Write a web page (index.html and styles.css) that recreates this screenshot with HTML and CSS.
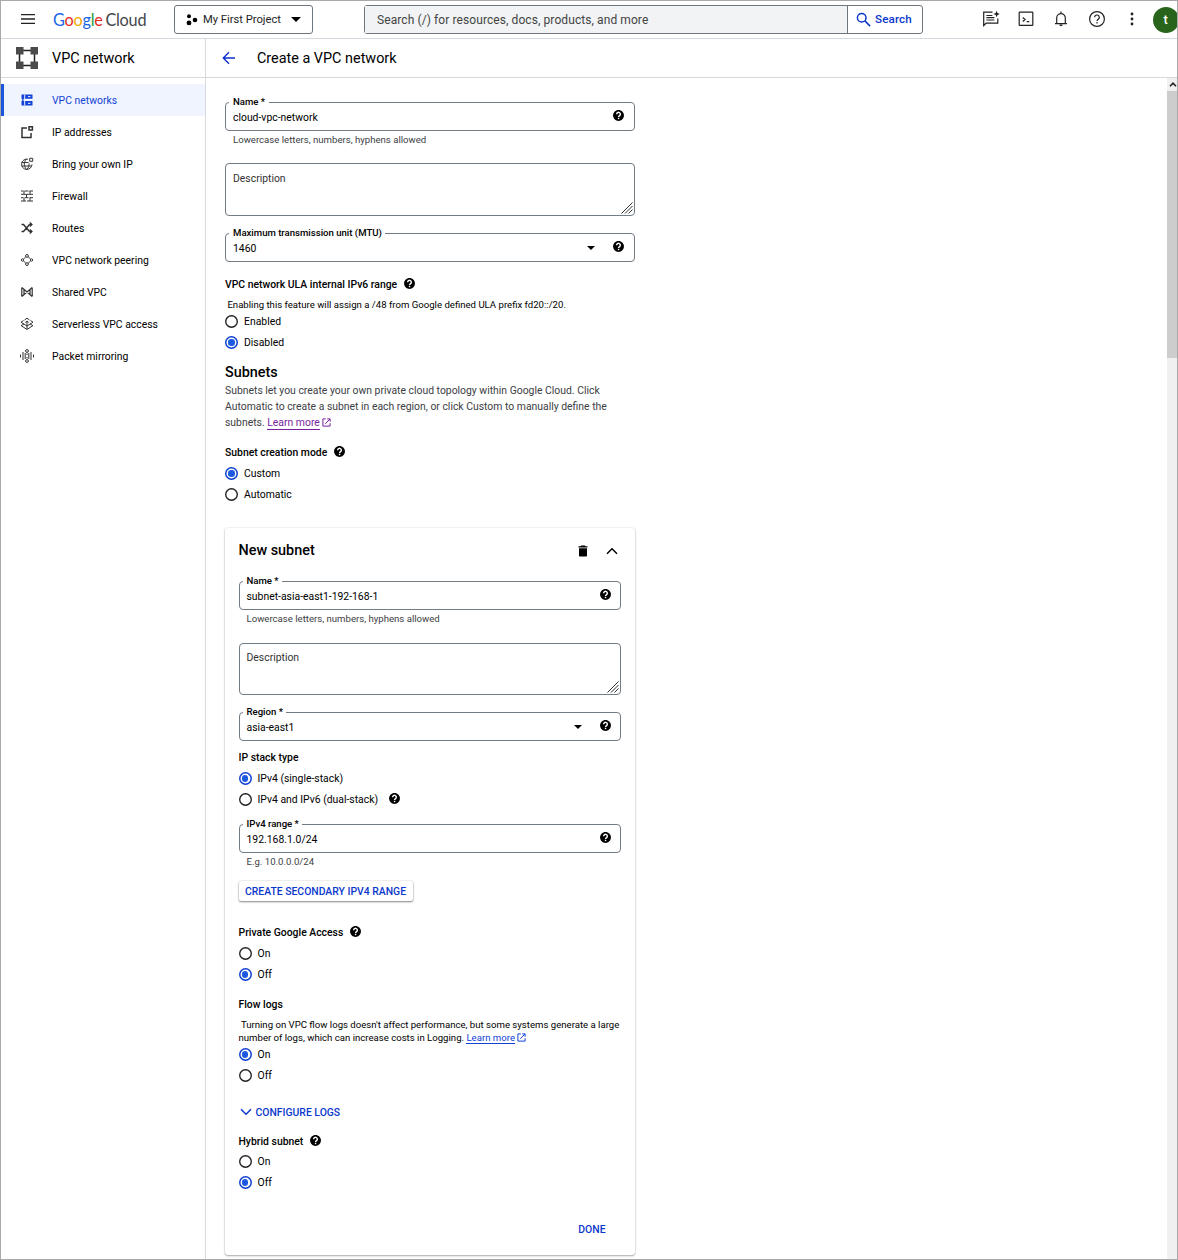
FILE: index.html
```html
<!DOCTYPE html>
<html lang="en">
<head>
<meta charset="utf-8">
<title>Create a VPC network – Google Cloud</title>
<link rel="stylesheet" href="styles.css">
</head>
<body>
<svg class="defs" width="0" height="0">
  <symbol id="help" viewBox="0 0 24 24"><path d="M12 2C6.48 2 2 6.48 2 12s4.48 10 10 10 10-4.48 10-10S17.52 2 12 2z"/><path d="M8.600 9.700a3.400 3.400 0 1 1 5.400 2.600c-1.300.9-1.900 1.300-1.900 2.500" fill="none" stroke="#fff" stroke-width="2.600"/><path d="M10.800 16.200h2.600v2.600h-2.600z" fill="#fff"/></symbol>
  <symbol id="caret" viewBox="0 0 10 5"><path d="M0 0h10L5 5z"/></symbol>
  <symbol id="grip" viewBox="0 0 12 12"><path d="M.5 11.500l11-11M4 11.500l7.500-7.500M7.500 11.500l4-4" fill="none" stroke="#333" stroke-width="1"/></symbol>
  <symbol id="external" viewBox="0 0 10 10"><path d="M4.200 1H1v8h8V5.800M5.800 1H9v3.200M9 1L3.600 6.400" fill="none" stroke="currentColor" stroke-width="1.100"/></symbol>
</svg>
<div class="frame">
  <header class="topbar">
    <svg class="menu" viewBox="0 0 14 10"><path d="M0 .5h14M0 5h14M0 9.500h14" stroke="#222" stroke-width="1.300"/></svg>
    <div class="logo"><span class="b">G</span><span class="r">o</span><span class="y">o</span><span class="b">g</span><span class="g">l</span><span class="r">e</span> <span class="cloud">Cloud</span></div>
    <div class="project">
      <svg width="12" height="12" viewBox="0 0 12 12"><circle cx="3" cy="2.200" r="2"/><circle cx="9" cy="6" r="2.300"/><circle cx="3" cy="8.900" r="2.400"/></svg>
      <span>My First Project</span>
      <svg class="project-caret"><use href="#caret"/></svg>
    </div>
    <div class="search">
      <div class="search-input">Search (/) for resources, docs, products, and more</div>
      <div class="search-button"><svg width="15" height="15" viewBox="0 0 15 15"><circle cx="5.700" cy="5.700" r="4.300"/><path d="M8.900 8.900l5.200 5.200"/></svg>Search</div>
    </div>
    <div class="tools">
      <svg width="18" height="18" viewBox="0 0 18 18"><path d="M10.500 2.200H1.700v13.300l2.500-2.400h11.600V8.500M4.400 5.500h6M4.400 7.700h8M4.400 10h8"/><path class="solid" d="M14.600.8l.9 2.300 2.300.9-2.300.9-.9 2.300-.9-2.300-2.300-.9 2.300-.9z"/></svg>
      <svg width="18" height="18" viewBox="0 0 18 18"><rect x="2.200" y="2.200" width="13.600" height="13.200" rx=".6"/><path d="M5.800 7.500l2.300 2-2.300 2M9.700 11.600h2.500"/></svg>
      <svg width="18" height="18" viewBox="0 0 18 18"><path d="M3 13.600h12M4.700 13.600V7.900a4.300 4.300 0 0 1 8.600 0v5.700M9 1.500v2"/><path class="solid" d="M7.300 14.600h3.400a1.700 1.700 0 0 1-3.400 0z"/></svg>
      <svg width="18" height="18" viewBox="0 0 18 18"><circle cx="9" cy="9" r="7.400"/><path d="M6.700 7.300a2.300 2.300 0 1 1 3.600 1.900c-.9.600-1.300 1-1.300 1.900M9 12.100v1.400"/></svg>
      <svg width="18" height="18" viewBox="0 0 18 18"><g class="solid"><circle cx="9" cy="4" r="1.400"/><circle cx="9" cy="9" r="1.400"/><circle cx="9" cy="14" r="1.400"/></g></svg>
    </div>
    <div class="avatar">t</div>
  </header>
  <div class="body">
    <aside class="sidebar">
      <div class="product">
        <svg width="24" height="24" viewBox="0 0 24 24"><path d="M7 4.500h10M7 19.500h10M4.500 7v10M19.500 7v10" stroke="#222" stroke-width="1.500"/><g fill="#4b4b4b"><path d="M1 1h7.500v7.500H1zM15.500 1H23v7.500h-7.500zM1 15.500h7.500V23H1zM15.500 15.500H23V23h-7.500z"/></g></svg>
        <span>VPC network</span>
      </div>
      <nav>
        <a class="active"><svg viewBox="0 0 14 14"><path class="fill" d="M1.500 1.500h11v4.300h-11zM1.500 8h11v4.500h-11zM2.200 5h1.300v4H2.200z"/><path d="M4.700 1.500v4.300M4.700 8v4.500M8 3.600h2.500M8 10.300h2.500" stroke="#edf3fe"/></svg>VPC networks</a>
        <a><svg viewBox="0 0 14 14"><path d="M7 3H2v9.400h9V8" stroke-width="1.500"/><path d="M9 1.700h3.400v3.400H9z" stroke-width="1.500"/></svg>IP addresses</a>
        <a><svg viewBox="0 0 14 14"><path d="M8 2.200a5.200 5.200 0 1 0 4 5.300M1.500 5.500h7M1.500 9h10M6.500 2C3.500 5 3.500 9 6.500 12.300M7 12.300C8.700 10.500 9.200 8.500 9 6.500"/><path d="M9.700 1.300h3v3h-3z"/></svg>Bring your own IP</a>
        <a><svg viewBox="0 0 14 14"><path d="M1 2h2.500M4.500 2h4M9.500 2H13M1 5.300h5M7 5.300h6M1 8.700h2.500M4.500 8.700h4M9.500 8.700H13M1 12h5M7 12h6M4 2v3M10 2v3M6.500 5v3.500M4 9v3M10 9v3"/></svg>Firewall</a>
        <a><svg viewBox="0 0 14 14"><path d="M1.500 3.500h2l6 7H12M1.500 10.500h2l6-7H12" stroke-width="1.500"/><path d="M9.800 1.500l2.200 2-2.200 2M9.800 8.500l2.200 2-2.200 2" stroke-width="1.200"/></svg>Routes</a>
        <a><svg viewBox="0 0 14 14"><path d="M5.800 3.800L3.500 6M8.200 3.800L10.500 6M3.500 8l2.300 2.200M10.500 8l-2.300 2.200"/><circle cx="7" cy="2.900" r="1.400"/><circle cx="7" cy="11.100" r="1.400"/><circle cx="2.500" cy="7" r="1.200"/><circle cx="11.500" cy="7" r="1.200"/></svg>VPC network peering</a>
        <a><svg viewBox="0 0 14 14"><path d="M1.800 2.500v9M12.200 2.500v9M4 4.500v5M10 4.500v5M1.800 2.500l10.400 9M12.200 2.500l-10.400 9" stroke-width="1.200"/></svg>Shared VPC</a>
        <a><svg viewBox="0 0 14 14"><path d="M4.500 3L7 1.200 9.500 3M3.500 3.500L1 5.200 7 9l6-3.800-2.500-1.700M1 8.500L7 12.500l6-4M4 7L1 8.700M10 7l3 1.700M7 4v8M5.300 5.500L7 4l1.700 1.500"/></svg>Serverless VPC access</a>
        <a><svg viewBox="0 0 14 14"><path d="M.5 5.500v3M3 3v8M5.200 4v6M7 4.500v1.500M7 8v1.500M8.800 4v6M11 3v8M13.500 5.500v3"/><circle cx="7" cy="2" r="1.400"/><circle cx="7" cy="12" r="1.400"/></svg>Packet mirroring</a>
      </nav>
    </aside>
    <main>
      <div class="page-title">
        <svg width="14" height="14" viewBox="0 0 14 14"><path d="M13 7H1.500M7 1.300L1.300 7 7 12.700"/></svg>
        <h1>Create a VPC network</h1>
      </div>
      <div class="scroller">
        <div class="content">
          <div class="field"><label>Name *</label><span class="value">cloud-vpc-network</span><svg class="help"><use href="#help"/></svg></div>
          <div class="hint">Lowercase letters, numbers, hyphens allowed</div>
          <div class="textarea first">Description<svg class="grip"><use href="#grip"/></svg></div>
          <div class="field select"><label>Maximum transmission unit (MTU)</label><span class="value">1460</span><svg class="drop"><use href="#caret"/></svg><svg class="help"><use href="#help"/></svg></div>

          <h3 class="ula">VPC network ULA internal IPv6 range<svg class="help"><use href="#help"/></svg></h3>
          <p class="note">Enabling this feature will assign a /48 from Google defined ULA prefix fd20::/20.</p>
          <div class="radio"><i></i>Enabled</div>
          <div class="radio on"><i></i>Disabled</div>

          <h2>Subnets</h2>
          <p class="intro">Subnets let you create your own private cloud topology within Google Cloud. Click<br>Automatic to create a subnet in each region, or click Custom to manually define the<br>subnets. <a class="visited">Learn more</a><svg class="external visited-icon"><use href="#external"/></svg></p>
          <h3 class="mode">Subnet creation mode<svg class="help"><use href="#help"/></svg></h3>
          <div class="radio on"><i></i>Custom</div>
          <div class="radio"><i></i>Automatic</div>

          <section class="card">
            <div class="card-head">
              <h2>New subnet</h2>
              <svg class="trash" viewBox="0 0 10 12"><path d="M3.200.5h3.600l.6.700h2.100v1.300H.5V1.200h2.100zM1 3.300h8v7.200c0 .6-.4 1-1 1H2c-.6 0-1-.4-1-1z"/></svg>
              <svg class="collapse" viewBox="0 0 12 8"><path d="M1 6.800l5-5 5 5"/></svg>
            </div>
            <div class="field"><label>Name *</label><span class="value">subnet-asia-east1-192-168-1</span><svg class="help"><use href="#help"/></svg></div>
            <div class="hint">Lowercase letters, numbers, hyphens allowed</div>
            <div class="textarea">Description<svg class="grip"><use href="#grip"/></svg></div>
            <div class="field select"><label>Region *</label><span class="value">asia-east1</span><svg class="drop"><use href="#caret"/></svg><svg class="help"><use href="#help"/></svg></div>

            <h3 class="stack">IP stack type</h3>
            <div class="radio on"><i></i>IPv4 (single-stack)</div>
            <div class="radio"><i></i>IPv4 and IPv6 (dual-stack)<svg class="help"><use href="#help"/></svg></div>
            <div class="field range"><label>IPv4 range *</label><span class="value">192.168.1.0/24</span><svg class="help"><use href="#help"/></svg></div>
            <div class="hint">E.g. 10.0.0.0/24</div>
            <div class="button">CREATE SECONDARY IPV4 RANGE</div>

            <h3 class="private">Private Google Access<svg class="help"><use href="#help"/></svg></h3>
            <div class="radio"><i></i>On</div>
            <div class="radio on"><i></i>Off</div>

            <h3 class="flow">Flow logs</h3>
            <p class="note">Turning on VPC flow logs doesn't affect performance, but some systems generate a large<br>number of logs, which can increase costs in Logging. <a>Learn more</a><svg class="external"><use href="#external"/></svg></p>
            <div class="radio on"><i></i>On</div>
            <div class="radio"><i></i>Off</div>
            <div class="expander"><svg viewBox="0 0 12 8"><path d="M1 1.200l5 5 5-5"/></svg><span>CONFIGURE LOGS</span></div>

            <h3 class="hybrid">Hybrid subnet<svg class="help"><use href="#help"/></svg></h3>
            <div class="radio"><i></i>On</div>
            <div class="radio on"><i></i>Off</div>
            <div class="done">DONE</div>
          </section>
        </div>
        <div class="scrollbar">
          <div class="arrow"><svg width="8" height="5" viewBox="0 0 8 5"><path d="M1 4.200l3-3 3 3"/></svg></div>
          <div class="thumb"></div>
        </div>
      </div>
    </main>
  </div>
</div>
</body>
</html>
```
FILE: styles.css
```css
* { box-sizing: border-box; }
body { margin: 0; font: 10.4px/16px Roboto, "Liberation Sans", sans-serif; color: #000; background: #fff; }
h1, h2, h3, p { margin: 0; }
svg { flex: none; }
.defs { position: absolute; }
.frame { width: 1178px; height: 1260px; border: 1px solid #a9a9a9; overflow: hidden; display: flex; flex-direction: column; }

.topbar { height: 38px; border-bottom: 1px solid #d3d9de; display: flex; align-items: center; flex: none; }
.topbar > * { flex: none; }
.menu { width: 14px; height: 10px; margin: 0 0 2px 20px; }
.logo { margin-left: 18px; width: 94px; font: 16.3px/24px Lato, sans-serif; white-space: nowrap; letter-spacing: -.27px; word-spacing: -1px; color: #44474b; }
.logo .b { color: #1a66e8; } .logo .r { color: #e2291c; } .logo .y { color: #f5ab00; } .logo .g { color: #1e9b3c; }
.project { margin-left: 27px; width: 139px; height: 29px; border: 1px solid #6d757d; border-radius: 3px; display: flex; align-items: center; padding-left: 11px; font-size: 11.2px; color: #222; }
.project span { margin-left: 5px; width: 88px; white-space: nowrap; }
.project-caret { width: 10px; height: 5px; }
.search { margin-left: 51px; width: 559px; height: 29px; border: 1px solid #6d757d; border-radius: 3px; display: flex; }
.search-input { width: 483px; flex: none; background: #f1f3f4; border-right: 1px solid #6d757d; padding-left: 12px; font-size: 12px; line-height: 28px; letter-spacing: .09px; color: #444; white-space: nowrap; }
.search-button { display: flex; align-items: center; padding: 0 0 1px 8px; font-size: 11.6px; font-weight: 500; letter-spacing: .15px; color: #0b38cc; }
.search-button svg { margin-right: 4px; fill: none; stroke: #0b38cc; stroke-width: 1.5; }
.tools { margin: -2px 0 0 59px; display: flex; gap: 17.2px; }
.tools svg { fill: none; stroke: #222; stroke-width: 1.2; }
.tools .solid { fill: #222; stroke: none; }
.avatar { margin-left: 12px; width: 26px; height: 26px; border-radius: 50%; background: #28641b; color: #fff; font-size: 13px; line-height: 26px; text-align: center; font-weight: 500; }

.body { flex: 1; min-height: 0; display: flex; }
.sidebar { width: 205px; border-right: 1px solid #d8dbde; flex: none; }
.product { height: 39px; border-bottom: 1px solid #d8dbde; display: flex; align-items: center; padding-left: 14px; font-size: 14.4px; }
.product span { margin-left: 13px; padding-top: 2px; }
nav { padding-top: 6px; }
nav a { height: 32px; display: flex; align-items: center; padding: 2px 0 0 19px; border-left: 0 solid #1a56db; }
nav svg { width: 14px; height: 14px; margin: -2px 18px 0 0; fill: none; stroke: #333; stroke-width: 1; }
nav .active { background: #f0f4fe; color: #1242d6; border-left-width: 3px; padding-left: 16px; }
nav .active svg { stroke: #1242d6; }
nav .fill { fill: #1242d6; stroke: none; }

main { flex: 1; min-width: 0; display: flex; flex-direction: column; }
.page-title { height: 39px; flex: none; border-bottom: 1px solid #d3d9de; display: flex; align-items: center; padding-left: 16px; }
.page-title svg { fill: none; stroke: #0b2fd0; stroke-width: 1.4; }
h1 { margin-left: 21px; padding-top: 2px; font-size: 14.4px; font-weight: 400; }
.scroller { flex: 1; min-height: 0; display: flex; justify-content: space-between; }
.content { width: 428.5px; padding: 24px 0 0 19px; }

.field { position: relative; height: 29px; border: 1px solid #737b83; border-radius: 4px; display: flex; align-items: center; padding: 0 8.5px 0 7px; }
.field label { position: absolute; left: 3px; top: -8px; padding: 0 3.5px 0 4px; background: #fff; font-size: 9.6px; line-height: 14px; font-weight: 500; letter-spacing: -.01px; white-space: nowrap; }
.value { flex: 1; padding-top: 2px; }
.help { width: 13px; height: 13px; }
.field .help { margin-top: -1.5px; }
.drop { width: 8px; height: 4px; margin-right: 17px; }
.hint { height: 17px; line-height: 17px; padding-left: 8px; font-size: 9.6px; color: #3c4043; }
.textarea { position: relative; margin-top: 16px; height: 52px; border: 1px solid #737b83; border-radius: 4px; padding: 6px 7px; color: #333; }
.textarea.first { margin-top: 15px; height: 53px; padding-top: 7px; }
.grip { position: absolute; right: 1px; bottom: 1px; width: 12px; height: 12px; }
.select { margin-top: 17px; }
h3 { height: 16px; padding-top: 1px; font-size: 10.4px; font-weight: 500; display: flex; align-items: center; }
h3 .help { margin: -2px 0 0 6px; }
.ula { margin-top: 14px; }
.note { margin-top: 6px; font-size: 9.6px; line-height: 13px; text-indent: 2.4px; white-space: nowrap; }
.radio { height: 21px; display: flex; align-items: center; }
.radio i { width: 13px; height: 13px; box-shadow: inset 0 0 0 1.4px #222; border-radius: 50%; margin-right: 6px; display: grid; place-items: center; }
.radio.on i { box-shadow: inset 0 0 0 1.5px #0b3fd0; }
.radio.on i::after { content: ""; width: 6.4px; height: 6.4px; border-radius: 50%; background: #1c5be0; }
.radio .help { margin: -2px 0 0 10px; }
h2 { margin-top: 10px; height: 20px; font-size: 14.4px; line-height: 20px; font-weight: 500; }
.intro { color: #3c4043; white-space: nowrap; }
.note a, .intro a { color: #1242d6; border-bottom: 1px solid #1242d6; }
.intro .visited { color: #7b1fa2; border-color: #7b1fa2; }
.external { width: 9px; height: 9px; margin-left: 2px; color: #1242d6; vertical-align: -1px; }
.visited-icon { color: #7b1fa2; }
.mode { margin: 13px 0 3px; }

.card { margin-top: 23px; height: 727px; border-radius: 3px; padding: 0 13.5px; box-shadow: 0 1px 2px rgba(0,0,0,.32), 0 0 2px rgba(0,0,0,.14); }
.card-head { height: 45px; margin-bottom: 8px; display: flex; align-items: center; padding-right: 3.5px; }
.card-head h2 { margin: 0; padding-top: .5px; flex: 1; }
.trash { width: 10px; height: 12px; margin-right: 18px; }
.collapse { width: 12px; height: 8px; fill: none; stroke: #000; stroke-width: 1.5; }
.stack { margin: 8px 0 3px; }
.range { margin-top: 14px; }
.button { width: 174px; height: 20px; margin: 11px 0 0; padding-top: 1px; border-radius: 2px; line-height: 20px; text-align: center; font-weight: 500; color: #0b38cc; box-shadow: 0 1px 2px rgba(0,0,0,.45), 0 0 2px rgba(0,0,0,.18); white-space: nowrap; }
.private { margin: 23px 0 3px; }
.flow { margin-top: 11px; }
.expander { margin-top: 18px; height: 16px; display: flex; align-items: center; font-weight: 500; color: #0b38cc; }
.expander span { padding-top: 2px; }
.expander svg { width: 12px; height: 8px; margin: 0 4px 0 1px; fill: none; stroke: #0b38cc; stroke-width: 1.5; }
.hybrid { margin: 13px 0 2px; }
.done { margin: 29px 15.5px 0 0; text-align: right; font-weight: 500; color: #0b38cc; }

.scrollbar { width: 10px; background: #f0f0f0; }
.arrow { height: 13px; padding-left: 2px; display: grid; place-items: center; }
.arrow svg { fill: none; stroke: #222; stroke-width: 1.6; }
.thumb { height: 267px; background: #cdcdcd; }
```
